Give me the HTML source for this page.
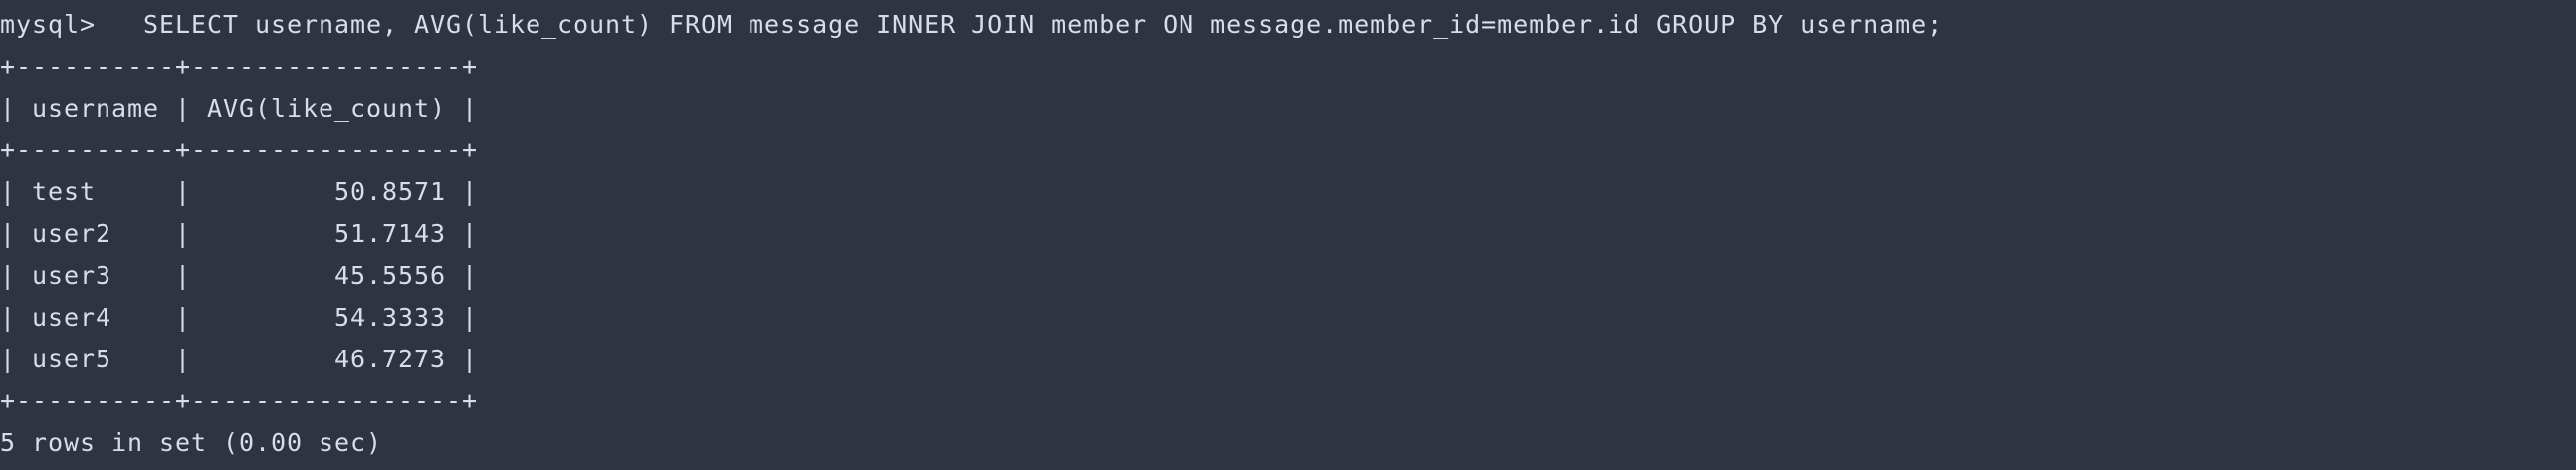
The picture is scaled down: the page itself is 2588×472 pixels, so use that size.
<!DOCTYPE html>
<html><head><meta charset="utf-8"><style>
html,body{margin:0;padding:0;background:#2e3440;width:2588px;height:472px;overflow:hidden}
pre{margin:0;padding-top:4px;font-family:"DejaVu Sans Mono","Liberation Mono",monospace;font-size:25px;letter-spacing:0.95px;line-height:42px;color:#d8dee9}
</style></head><body><pre>mysql>   SELECT username, AVG(like_count) FROM message INNER JOIN member ON message.member_id=member.id GROUP BY username;
+----------+-----------------+
| username | AVG(like_count) |
+----------+-----------------+
| test     |         50.8571 |
| user2    |         51.7143 |
| user3    |         45.5556 |
| user4    |         54.3333 |
| user5    |         46.7273 |
+----------+-----------------+
5 rows in set (0.00 sec)</pre></body></html>
